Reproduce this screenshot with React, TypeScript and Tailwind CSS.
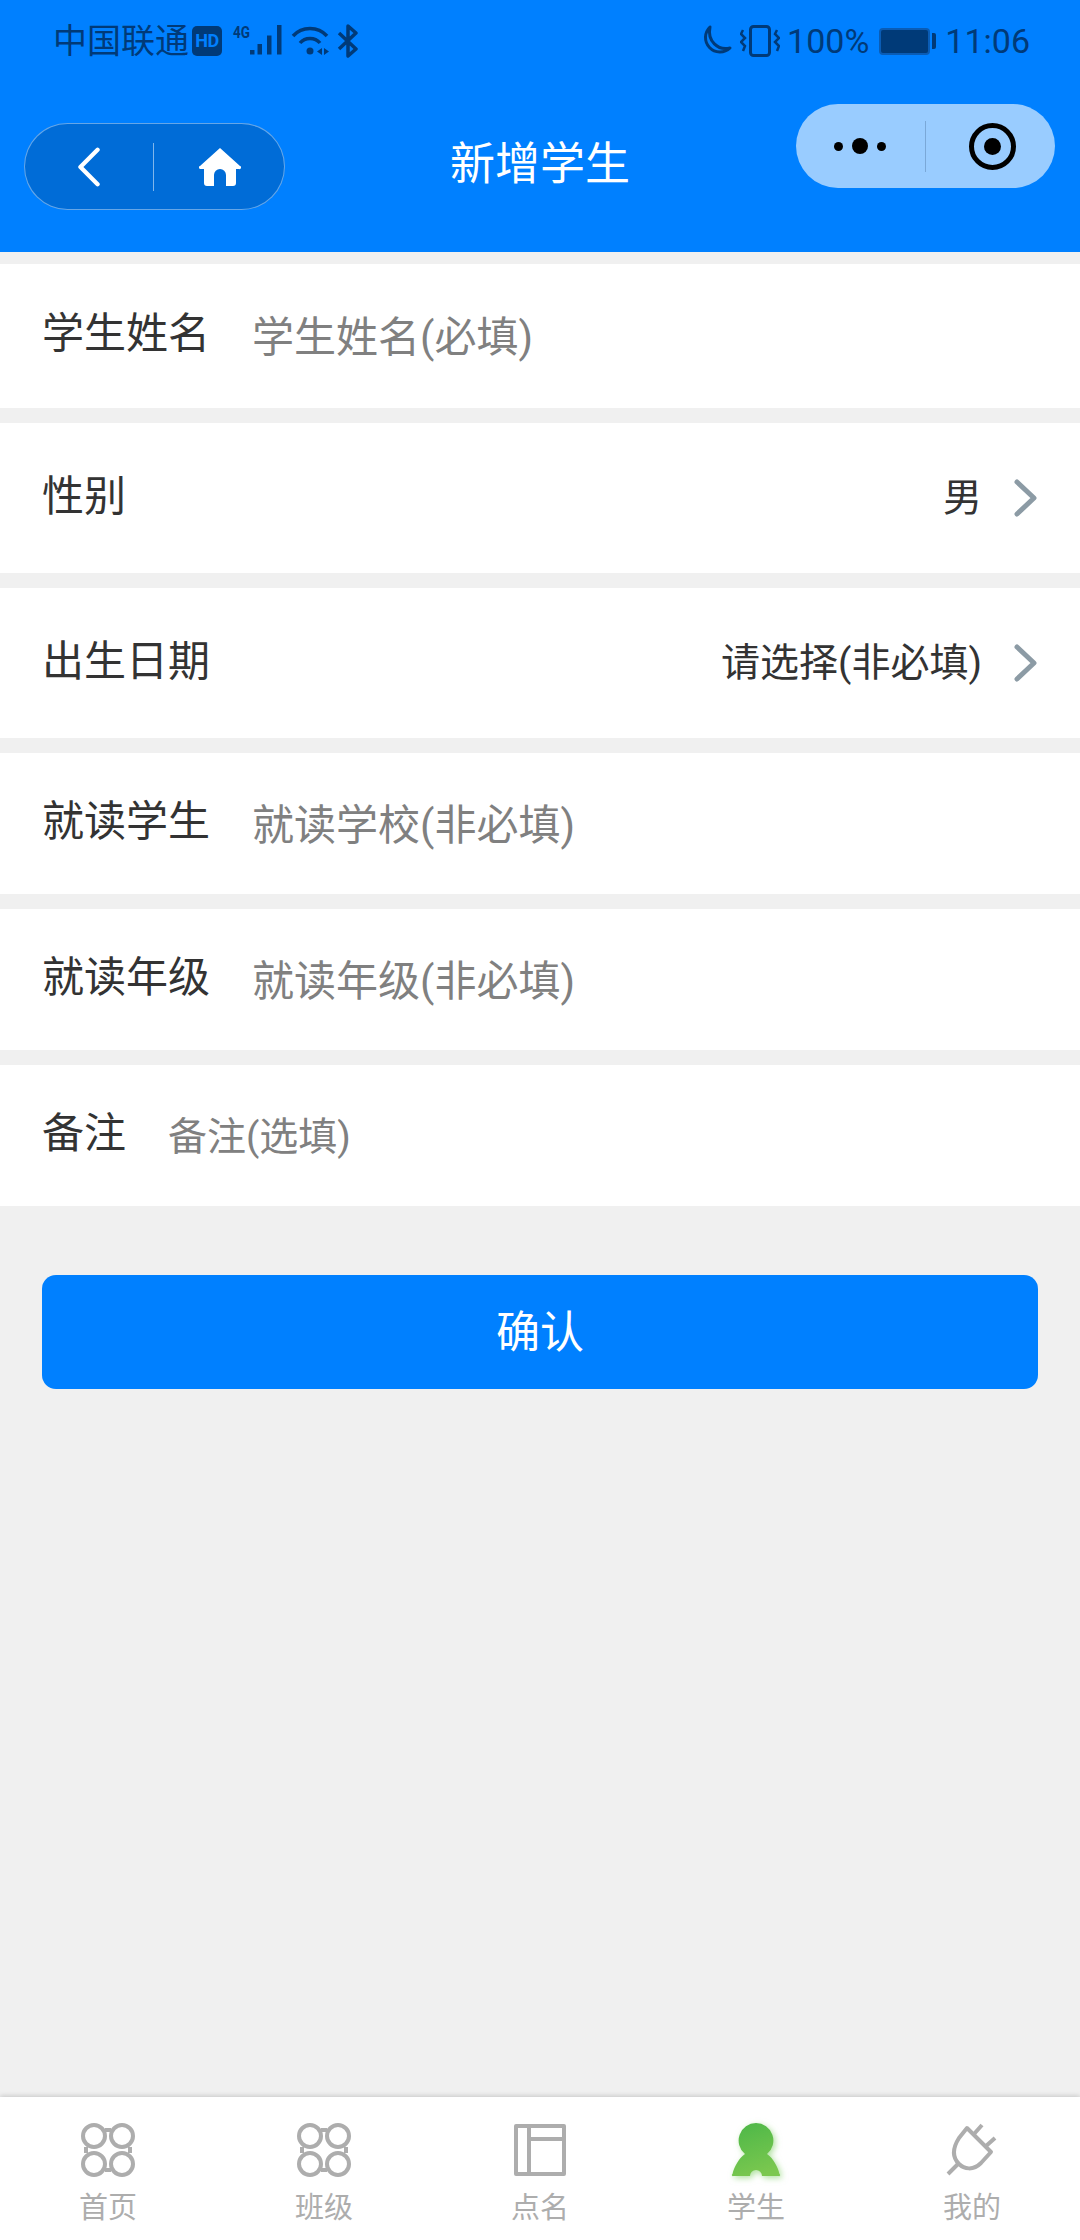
import React from 'react';

const cjk = 'font-["Roboto","Noto_Sans_CJK_SC",sans-serif]';

const Chevron = () => (
  <svg width="24" height="38" viewBox="0 0 24 38" className="ml-[32px]" fill="none">
    <path d="M3 3 L20 19 L3 35" stroke="#8c9ba5" strokeWidth="5" strokeLinecap="round" strokeLinejoin="round" />
  </svg>
);

const FourCircles = () => (
  <svg width="54" height="54" viewBox="0 0 54 54" fill="none" stroke="#adadad" strokeWidth="4">
    <circle cx="13" cy="13" r="11" />
    <circle cx="41" cy="13" r="11" />
    <circle cx="13" cy="41" r="11" />
    <circle cx="41" cy="41" r="11" />
    <path d="M24 7 H30 M24 47 H30 M5 24 V30 M49 24 V30" />
  </svg>
);

const Panel = () => (
  <svg width="52" height="52" viewBox="0 0 52 52" fill="none" stroke="#adadad" strokeWidth="4" strokeLinejoin="round">
    <rect x="2" y="2" width="48" height="48" />
    <path d="M15 2 V50 M15 15 H50" />
  </svg>
);

const Student = () => (
  <svg width="60" height="54" viewBox="0 3 60 54" fill="none" className="drop-shadow-[2px_2px_3px_rgba(110,200,80,0.55)]">
    <defs>
      <linearGradient id="studentGrad" x1="0.3" y1="0" x2="0.6" y2="1">
        <stop offset="0" stopColor="#4fb848" />
        <stop offset="1" stopColor="#7cc84f" />
      </linearGradient>
    </defs>
    <path
      fill="url(#studentGrad)"
      d="M30 3 a17.5 17.5 0 0 1 11 31 C47 38 52 47 53.5 54 a1 1 0 0 1 -1 2 H36 a6 6 0 0 0 -12 0 H7.5 a1 1 0 0 1 -1 -2 C8 47 13 38 19 34 A17.5 17.5 0 0 1 30 3 Z"
    />
  </svg>
);

const Plug = () => (
  <svg width="54" height="56" viewBox="0 0 54 56" fill="none" stroke="#adadad" strokeWidth="4">
    <path d="M22 6 L46 30 L36 41 C28 49 19 47 14 42 C8 36 7 27 14 16 Z" strokeLinejoin="round" />
    <path d="M29 12 L37 3 M41 24 L50 16 M13 42 L3 52" />
  </svg>
);

const tabs = [
  { label: '首页', icon: <FourCircles /> },
  { label: '班级', icon: <FourCircles /> },
  { label: '点名', icon: <Panel /> },
  { label: '学生', icon: <Student /> },
  { label: '我的', icon: <Plug /> },
];

const StatusBar = () => (
  <div className="flex h-[84px] items-center justify-between pb-[2px] pl-[53px] pr-[50px] text-[#003a78]">
    <div className="flex items-center">
      <span className="text-[34px] leading-none">中国联通</span>
      <span className="ml-[3px] flex h-[30px] w-[30px] items-center justify-center rounded-[5px] bg-[#003a78] text-[18px] font-bold leading-none tracking-[-0.5px] text-[#0080ff]">HD</span>
      <svg width="50" height="32" viewBox="0 0 50 32" className="ml-[10px] overflow-visible" fill="#003a78">
        <text x="1" y="13" fontSize="16" fontWeight="700" textLength="17" lengthAdjust="spacingAndGlyphs">4G</text>
        <rect x="18" y="25" width="4.5" height="4.5" />
        <rect x="25.5" y="19" width="4.5" height="10.5" />
        <rect x="35" y="10.5" width="4.5" height="19" />
        <rect x="45" y="0" width="4.5" height="29.5" />
      </svg>
      <svg width="38" height="32" viewBox="0 0 38 32" className="ml-[9px]" fill="none" stroke="#003a78" strokeWidth="3.5">
        <path d="M2 11 C11 1 27 1 36 11" />
        <path d="M9 18 C14 12 24 12 29 18" />
        <circle cx="19" cy="26" r="3.5" fill="#003a78" stroke="none" />
        <path d="M26 26.5 L31 23 V30 Z M33 23 L38 26.5 L33 30 Z" fill="#003a78" stroke="none" />
      </svg>
      <svg width="22" height="34" viewBox="0 0 22 34" className="ml-[8px]" fill="none" stroke="#003a78" strokeWidth="3.5">
        <path d="M2 9 L19 25 L11 32 V2 L19 9 L2 25" strokeLinejoin="round" />
      </svg>
    </div>
    <div className="flex items-center">
      <svg width="34" height="32" viewBox="0 0 32 32" fill="none" stroke="#003a78" strokeWidth="3">
        <path d="M10 2 A14.5 14.5 0 1 0 30 23 C18 26 7 16 10 2 Z" strokeLinejoin="round" />
      </svg>
      <svg width="40" height="32" viewBox="0 0 40 32" className="ml-[7px]" fill="none" stroke="#003a78" strokeWidth="3">
        <rect x="10.5" y="1.5" width="19" height="29" rx="3" />
        <path d="M3 5 L1 9 L5 13 L1 17 L5 21 L3 26 M37 5 L35 9 L39 13 L35 17 L39 21 L37 26" strokeWidth="2.5" />
      </svg>
      <span className="ml-[7px] text-[34px] leading-none">100%</span>
      <div className="ml-[10px] flex items-center">
        <div className="h-[27px] w-[51px] rounded-[4px] border-[2px] border-[#0a5cb5] bg-[#003a78]" />
        <div className="ml-[2px] h-[16px] w-[4px] rounded-r-[2px] bg-[#003a78]" />
      </div>
      <span className="ml-[9px] text-[34px] leading-none">11:06</span>
    </div>
  </div>
);

const NavBar = () => (
  <div className="relative flex h-[168px] items-start justify-between pl-[24px] pr-[25px]">
    <div className="mt-[39px] flex h-[87px] w-[261px] items-center rounded-full border border-white/40 bg-[#006cd7]">
      <div className="flex w-[128px] justify-center">
        <svg width="24" height="40" viewBox="0 0 24 42" fill="none">
          <path d="M21 3 L3 21 L21 39" stroke="#fff" strokeWidth="4.5" strokeLinecap="round" strokeLinejoin="round" />
        </svg>
      </div>
      <div className="h-[48px] w-px bg-white/50" />
      <div className="flex flex-1 justify-center pl-[2px]">
        <svg width="42" height="40" viewBox="0 0 42 40" fill="#fff">
          <path d="M21 1 L41 19 a1.5 1.5 0 0 1 -1 3 H37 V36 a3 3 0 0 1 -3 3 H27 V28 a6 6 0 0 0 -12 0 V39 H8 a3 3 0 0 1 -3 -3 V22 H2 a1.5 1.5 0 0 1 -1 -3 Z" />
        </svg>
      </div>
    </div>
    <span className="absolute left-0 right-0 top-[49px] text-center text-[45px] font-normal leading-[64px] text-white">新增学生</span>
    <div className="mt-[20px] flex h-[84px] w-[259px] items-center rounded-full bg-[#99ccff]">
      <div className="flex w-[129px] items-center justify-center gap-[9px] pr-[2px]">
        <div className="h-[9px] w-[9px] rounded-full bg-black" />
        <div className="h-[16px] w-[16px] rounded-full bg-black" />
        <div className="h-[9px] w-[9px] rounded-full bg-black" />
      </div>
      <div className="h-[51px] w-px bg-[#7aa8d8]" />
      <div className="flex flex-1 justify-center pl-[4px]">
        <div className="flex h-[47px] w-[47px] items-center justify-center rounded-full border-[5px] border-black">
          <div className="h-[17px] w-[17px] rounded-full bg-black" />
        </div>
      </div>
    </div>
  </div>
);

const InputRow = ({ label, placeholder, labelWidth, height, size }: { label: string; placeholder: string; labelWidth: string; height: string; size: string }) => (
  <div className={`flex items-center bg-white pl-[42px] ${height}`}>
    <span className={`text-[42px] leading-none text-[#333] -translate-y-[2px] ${labelWidth}`}>{label}</span>
    <span className={`leading-none text-[#808080] translate-y-[2px] ${size}`}>{placeholder}</span>
  </div>
);

const SelectRow = ({ label, value }: { label: string; value: string }) => (
  <div className="flex h-[150px] items-center justify-between bg-white pl-[42px] pr-[42px]">
    <span className="-translate-y-[1px] text-[42px] leading-none text-[#333]">{label}</span>
    <div className="flex items-center">
      <span className="text-[39px] leading-none text-[#333]">{value}</span>
      <Chevron />
    </div>
  </div>
);

export default function App() {
  return (
    <div className={`flex h-[2240px] w-[1080px] flex-col overflow-hidden bg-[#f0f0f0] ${cjk}`}>
      <div className="h-[252px] shrink-0 bg-[#0080ff]">
        <StatusBar />
        <NavBar />
      </div>

      <div className="mt-[12px] flex flex-col gap-[15px]">
        <InputRow label="学生姓名" placeholder="学生姓名(必填)" labelWidth="w-[210px]" height="h-[144px]" size="text-[42px]" />
        <SelectRow label="性别" value="男" />
        <SelectRow label="出生日期" value="请选择(非必填)" />
        <InputRow label="就读学生" placeholder="就读学校(非必填)" labelWidth="w-[210px]" height="h-[141px]" size="text-[42px]" />
        <InputRow label="就读年级" placeholder="就读年级(非必填)" labelWidth="w-[210px]" height="h-[141px]" size="text-[42px]" />
        <InputRow label="备注" placeholder="备注(选填)" labelWidth="w-[126px]" height="h-[141px]" size="text-[39px]" />
      </div>

      <button className="mx-[42px] mt-[69px] h-[114px] shrink-0 rounded-[14px] bg-[#0080ff] pt-[2px] text-[44px] text-white">确认</button>

      <div className="mt-auto flex h-[143px] shrink-0 bg-white shadow-[0_-1px_5px_rgba(0,0,0,0.18)]">
        {tabs.map((tab) => (
          <div key={tab.label} className="flex flex-1 flex-col items-center pt-[23px]">
            <div className="flex h-[60px] items-center justify-center">{tab.icon}</div>
            <span className="mt-[11px] text-[29px] leading-[34px] text-[#adadad]">{tab.label}</span>
          </div>
        ))}
      </div>
    </div>
  );
}
